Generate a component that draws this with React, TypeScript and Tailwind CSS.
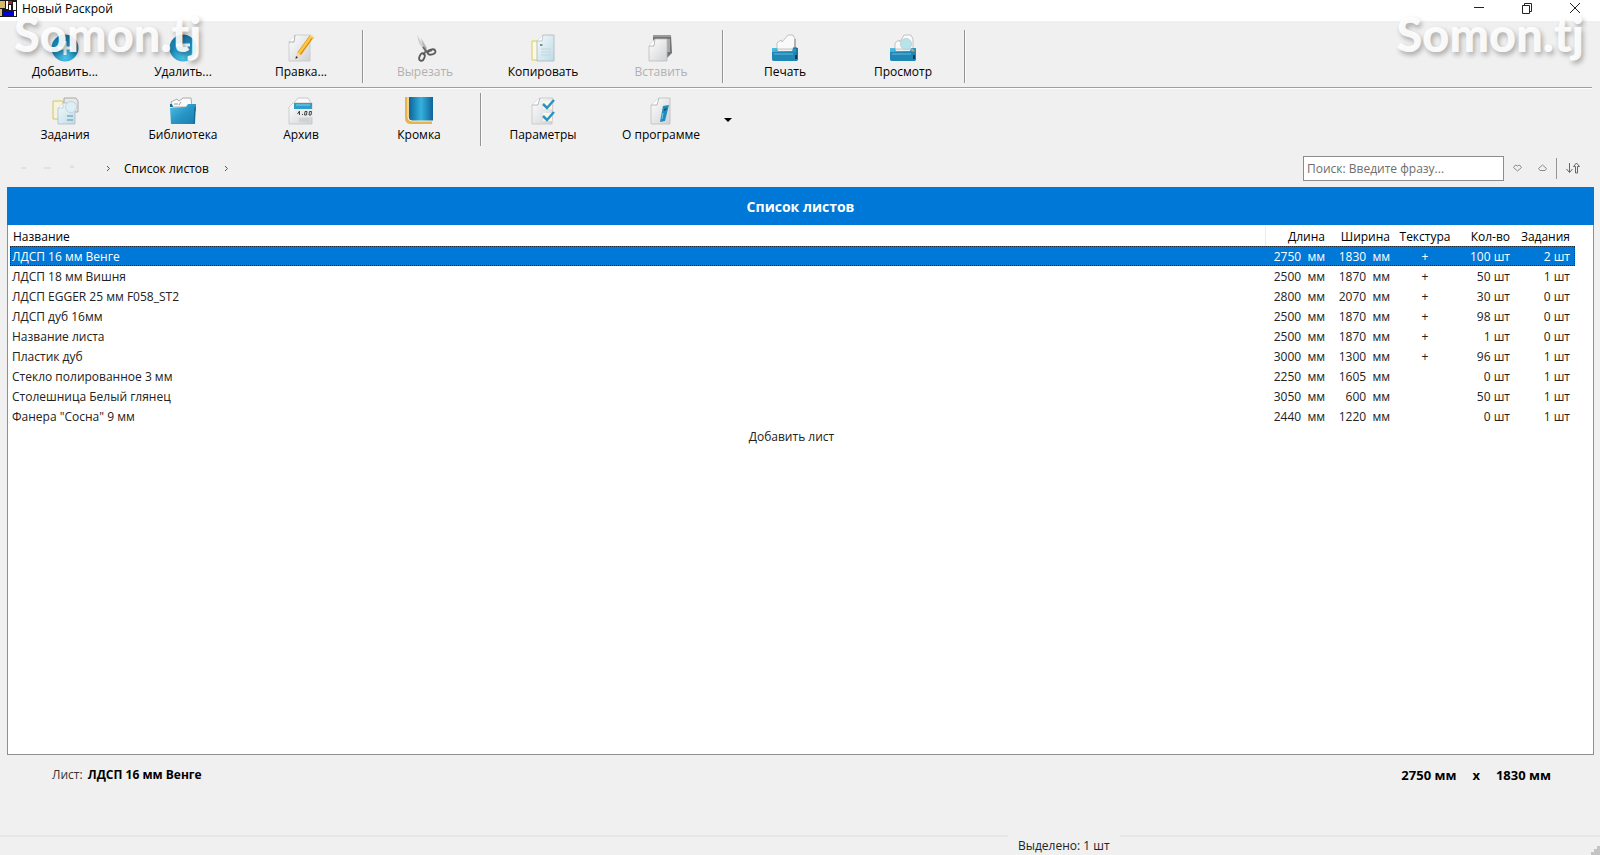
import React from 'react';
import { clsx } from 'clsx';

interface Sheet {
  name: string;
  length: number;
  width: number;
  texture: boolean;
  count: number;
  jobs: number;
}

interface ToolButtonProps {
  label: string;
  icon: React.ReactNode;
  disabled?: boolean;
}

const sheets: Sheet[] = [
  { name: 'ЛДСП 16 мм Венге', length: 2750, width: 1830, texture: true, count: 100, jobs: 2 },
  { name: 'ЛДСП 18 мм Вишня', length: 2500, width: 1870, texture: true, count: 50, jobs: 1 },
  { name: 'ЛДСП EGGER 25 мм F058_ST2', length: 2800, width: 2070, texture: true, count: 30, jobs: 0 },
  { name: 'ЛДСП дуб 16мм', length: 2500, width: 1870, texture: true, count: 98, jobs: 0 },
  { name: 'Название листа', length: 2500, width: 1870, texture: true, count: 1, jobs: 0 },
  { name: 'Пластик дуб', length: 3000, width: 1300, texture: true, count: 96, jobs: 1 },
  { name: 'Стекло полированное 3 мм', length: 2250, width: 1605, texture: false, count: 0, jobs: 1 },
  { name: 'Столешница Белый глянец', length: 3050, width: 600, texture: false, count: 50, jobs: 1 },
  { name: 'Фанера "Сосна" 9 мм', length: 2440, width: 1220, texture: false, count: 0, jobs: 1 },
];

const Icon: React.FC<{ children: React.ReactNode }> = ({ children }) => (
  <svg className="w-7 h-7 shrink-0" viewBox="0 0 28 28" fill="none" aria-hidden="true">
    {children}
  </svg>
);

// Gradients shared by all toolbar icons
const IconDefs = () => (
  <svg className="absolute w-0 h-0" aria-hidden="true">
    <defs>
      <radialGradient id="ball" cx="0.5" cy="0.85" r="0.8">
        <stop offset="0" stopColor="#4cc3e6" />
        <stop offset="0.6" stopColor="#1c8dbd" />
        <stop offset="1" stopColor="#1a74a3" />
      </radialGradient>
      <linearGradient id="blue" x1="0" y1="0" x2="1" y2="1">
        <stop offset="0" stopColor="#55bfe0" />
        <stop offset="0.5" stopColor="#2797c6" />
        <stop offset="1" stopColor="#1a7cae" />
      </linearGradient>
      <linearGradient id="edge" x1="0" y1="0" x2="1" y2="0">
        <stop offset="0" stopColor="#0d6398" />
        <stop offset="0.5" stopColor="#35b2df" />
        <stop offset="1" stopColor="#0d6398" />
      </linearGradient>
      <linearGradient id="paper" x1="0" y1="0" x2="1" y2="1">
        <stop offset="0" stopColor="#ffffff" />
        <stop offset="1" stopColor="#cfd2d4" />
      </linearGradient>
      <linearGradient id="ice" x1="0" y1="0" x2="1" y2="1">
        <stop offset="0" stopColor="#f4fafc" />
        <stop offset="1" stopColor="#bddbe6" />
      </linearGradient>
    </defs>
  </svg>
);

const AddIcon = () => (
  <Icon>
    <circle cx="14" cy="14" r="13.5" fill="url(#ball)" />
    <path d="M14 7v14M7 14h14" stroke="#e8f6fb" strokeWidth="3" />
  </Icon>
);

const RemoveIcon = () => (
  <Icon>
    <circle cx="14" cy="14" r="13.5" fill="url(#ball)" />
    <path d="M7 11h14" stroke="#e8f6fb" strokeWidth="3" />
  </Icon>
);

const EditIcon = () => (
  <Icon>
    <path d="M2 8 8 1h15v26H2z" fill="url(#paper)" stroke="#c4c6c8" strokeWidth="0.8" />
    <path d="M2 8h5l1-7" fill="#fff" stroke="#9a9a9a" strokeWidth="0.8" />
    <path d="M25 2 12 20" stroke="#d98e16" strokeWidth="4.5" />
    <path d="M24.5 2 11.5 20" stroke="#ffc83a" strokeWidth="2.5" />
    <path d="m10 18 4 3-5 4z" fill="#eed8ac" />
    <path d="m9 22 2 1.500L8.500 25z" fill="#333" />
    <path d="m23 1 4 3" stroke="#e9dca0" strokeWidth="2" />
  </Icon>
);

const CutIcon = () => (
  <Icon>
    <path d="M6 1 8 9l6 9 2-2z" fill="#d0d0d0" />
    <path d="M10 4l3 11 1 3 2-4z" fill="#b4b4b4" />
    <path d="m12 13 4 5 5-2M15 17l-3 4" stroke="#6a6a6a" strokeWidth="2" />
    <ellipse cx="20.500" cy="18" rx="4" ry="2.500" transform="rotate(-15 20.500 18)" stroke="#5a5a5a" strokeWidth="1.800" />
    <ellipse cx="11" cy="23" rx="2.500" ry="4" transform="rotate(22 11 23)" stroke="#5a5a5a" strokeWidth="1.800" />
  </Icon>
);

const CopyIcon = () => (
  <Icon>
    <path d="M3 7h8v19H3z" fill="#fbf9e6" stroke="#d9cc52" />
    <path d="M8 7 14 1h11v26H8z" fill="url(#ice)" stroke="#a9b7bd" strokeWidth="0.8" />
    <path d="M8 7h5l1-6" fill="#fff" stroke="#b6bdc0" strokeWidth="0.8" />
    <path d="M11 10h2.500v2H11z" fill="#7b8f99" />
    <path d="M12 15h10M12 18h10M12 21h10" stroke="#c5d5dc" />
  </Icon>
);

const PasteIcon = () => (
  <Icon>
    <path d="M6 1h18l1 18-5 5H6z" fill="#747474" />
    <path d="M6 1h18v2H6z" fill="#9a9a9a" />
    <path d="M20 5h3v13h-3z" fill="#a8a8a8" />
    <path d="m2 12 6-7h12v22H2z" fill="url(#paper)" stroke="#bbb" strokeWidth="0.8" />
    <path d="M2 12h5l1-7" fill="#fff" stroke="#aaa" strokeWidth="0.8" />
  </Icon>
);

const PrintIcon = () => (
  <Icon>
    <path d="m6 9 4-3 1 2 6-7h5l2 4v10H6z" fill="#fafafa" stroke="#b5b5b5" strokeWidth="0.8" />
    <path d="M24 5v10" stroke="#888" />
    <path d="M1 14h5l1 3h14l1-3h5v11l-1 2H2l-1-2z" fill="url(#blue)" />
    <path d="M1 18h26v7l-1 2H2l-1-2z" fill="#1f86b5" />
    <path d="M3 20h19" stroke="#63bcdc" />
    <path d="M22 14h4v11" stroke="#165f86" />
    <path d="M24 21h2v4h-2z" fill="#0b3b55" />
  </Icon>
);

const PreviewIcon = () => (
  <Icon>
    <path d="m6 9 4-3 1 2 4-7h7l2 4v10H6z" fill="#fafafa" stroke="#b5b5b5" strokeWidth="0.8" />
    <path d="M1 14h5l1 3h14l1-3h5v11l-1 2H2l-1-2z" fill="url(#blue)" />
    <path d="M1 18h26v7l-1 2H2l-1-2z" fill="#1f86b5" />
    <path d="M3 20h19" stroke="#63bcdc" />
    <circle cx="17" cy="10" r="5.500" fill="#a9dfe6" fillOpacity="0.85" stroke="#bcd3d6" />
    <path d="m22 15 3 2" stroke="#caa765" strokeWidth="2" />
    <path d="M24 21h2v4h-2z" fill="#0b3b55" />
  </Icon>
);

const JobsIcon = () => (
  <Icon>
    <path d="M2 4h10v18H2z" fill="#f5f3e0" stroke="#d3c65e" />
    <path d="M13 1h12l2 3v11H13z" fill="#e8e8e8" stroke="#999" strokeWidth="0.8" />
    <path d="m7 11 5-5h12v21H7z" fill="url(#ice)" stroke="#a7bfc9" strokeWidth="0.8" />
    <path d="M7 11h5V6" fill="#f8fcfd" stroke="#b7cad1" strokeWidth="0.8" />
    <circle cx="20" cy="10" r="5.500" fill="#dceff5" stroke="#bccfd6" strokeWidth="0.8" />
    <path d="M16 19h6M16 23h6" stroke="#84abc0" strokeWidth="1.500" />
  </Icon>
);

const LibraryIcon = () => (
  <Icon>
    <path d="M2 5 8 2l2 2 4-3h8l1 9H3z" fill="#fafafa" stroke="#999" strokeWidth="0.8" />
    <path d="M5 7h4M12 5l-2 3" stroke="#888" strokeWidth="0.8" />
    <path d="M1 7h2l1 3h-3zM26 8h1v6h-2z" fill="#176f9c" />
    <path d="M1 11 17 10l2-3h8l-1 20H2z" fill="url(#blue)" />
    <path d="m26 10-1 17" stroke="#14688f" />
  </Icon>
);

const ArchiveIcon = () => (
  <Icon>
    <path d="M7 6 11 1h10l3 5" fill="#fafafa" stroke="#bbb" strokeWidth="0.8" />
    <path d="M2 10 6 6h19v21H2z" fill="url(#paper)" stroke="#c4c4c4" strokeWidth="0.8" />
    <path d="M7 6h18v6H7z" fill="#2f9fca" />
    <path d="M9 8h14" stroke="#85d0ea" />
    <path d="M9 12h17v8H9z" fill="#e9ebec" />
    <path d="m10.500 17 2-3v4M15 17.500h1M18 14.500h2l-.5 3.500h-2zM22.500 14.500h2L24 18h-2z" stroke="#444" />
    <path d="M12 22h10M12 24h10" stroke="#c3c8ca" />
  </Icon>
);

const EdgeIcon = () => (
  <Icon>
    <path d="M0 0h5v21q0 2 2 2h20v4H6q-6 0-6-6z" fill="#e6b34e" />
    <path d="M4 0h24v24H8q-4 0-4-4z" fill="url(#edge)" />
    <path d="M3 0v20q0 4 4 4h21" stroke="#fff3cf" />
  </Icon>
);

const OptionsIcon = () => (
  <Icon>
    <path d="m3 8 8-7h13l-1 26H3z" fill="url(#paper)" stroke="#c4c4c4" strokeWidth="0.8" />
    <path d="M3 8h6l2-7" fill="#fff" stroke="#aaa" strokeWidth="0.8" />
    <path d="M14 4h9v8h-9zM14 16h9v8h-9z" fill="#faf8e2" />
    <path d="m14 7 4 4 7-8M14 19l4 4 7-8" stroke="#2a93c4" strokeWidth="2.500" />
  </Icon>
);

const AboutIcon = () => (
  <Icon>
    <path d="m4 8 8-7h11v26H4z" fill="url(#paper)" stroke="#bcbcbc" strokeWidth="0.8" />
    <path d="M4 8h6l2-7" fill="#fff" stroke="#aaa" strokeWidth="0.8" />
    <path d="m16 9 6-1-4 16-5 1z" fill="#1f8cbe" />
    <path d="m17 12 3-1-1 2-2 1z" fill="#0c4e73" />
    <path d="m16 16-1 6" stroke="#6fcbe8" />
  </Icon>
);

const ToolButton: React.FC<ToolButtonProps> = ({ label, icon, disabled }) => (
  <button
    type="button"
    disabled={disabled}
    className={clsx('w-[118px] flex flex-col items-center pt-1', disabled && 'text-[#b0b0b0]')}
  >
    {icon}
    <span className="leading-5">{label}</span>
  </button>
);

const Separator = () => (
  <div className="w-[6px] flex justify-center">
    <div className="w-[2px] border-l border-[#949494] bg-[#fafafa]" />
  </div>
);

const Watermark: React.FC<{ className: string }> = ({ className }) => (
  <div
    className={clsx(
      "absolute top-[14px] pointer-events-none font-['Lato',sans-serif] font-black text-[47px] leading-10 text-white/90 [text-shadow:2px_3px_5px_rgba(0,0,0,0.3)]",
      className
    )}
  >
    Somon.tj
  </div>
);

const TitleBar = () => (
  <header className="h-[21px] shrink-0 bg-white flex items-start justify-between">
    <div className="flex items-start gap-[5px]">
      <svg className="w-[17px] h-[17px]" viewBox="0 0 17 17" aria-hidden="true">
        <path d="M0 0h17v17H0z" fill="#1a1a1a" />
        <path d="M0 1h5v7H0z" fill="#d6b96a" />
        <path d="M0 9h2v7H0z" fill="#d6c08c" />
        <path d="M6 1h2v8H6zM13 2h3v8h-3z" fill="#fff" />
        <path d="M8 1h4v3H8z" fill="#9c2a2a" />
        <path d="M9 5h2v5H9zM14 11h2v5h-2z" fill="#fff" />
        <path d="M4 11h9v5H4z" fill="#0000d8" />
      </svg>
      <h1 className="leading-[18px]">Новый Раскрой</h1>
    </div>
    <div className="flex items-center pt-[2px] pr-px">
      <button type="button" aria-label="Свернуть" className="w-12 flex justify-center">
        <svg className="w-3 h-3" viewBox="0 0 12 12" fill="none" stroke="#222">
          <path d="M1 5.500h10" />
        </svg>
      </button>
      <button type="button" aria-label="Восстановить" className="w-12 flex justify-center">
        <svg className="w-3 h-3" viewBox="0 0 12 12" fill="none" stroke="#222">
          <path d="M1.500 3.500h7v8h-7zM3.500 3.500v-2h7v8h-2" />
        </svg>
      </button>
      <button type="button" aria-label="Закрыть" className="w-12 flex justify-center">
        <svg className="w-3 h-3" viewBox="0 0 12 12" fill="none" stroke="#222">
          <path d="m1 1 10 10M11 1 1 11" />
        </svg>
      </button>
    </div>
  </header>
);

const Toolbar = () => (
  <nav>
    <div className="flex h-[53px] mt-[9px] pl-[6px]">
      <ToolButton label="Добавить..." icon={<AddIcon />} />
      <ToolButton label="Удалить..." icon={<RemoveIcon />} />
      <ToolButton label="Правка..." icon={<EditIcon />} />
      <Separator />
      <ToolButton label="Вырезать" icon={<CutIcon />} disabled />
      <ToolButton label="Копировать" icon={<CopyIcon />} />
      <ToolButton label="Вставить" icon={<PasteIcon />} disabled />
      <Separator />
      <ToolButton label="Печать" icon={<PrintIcon />} />
      <ToolButton label="Просмотр" icon={<PreviewIcon />} />
      <Separator />
    </div>
    <div className="mt-1 mx-2 h-[2px] border-t border-[#a0a0a0] bg-white" />
    <div className="flex h-[53px] mt-1 pl-[6px]">
      <ToolButton label="Задания" icon={<JobsIcon />} />
      <ToolButton label="Библиотека" icon={<LibraryIcon />} />
      <ToolButton label="Архив" icon={<ArchiveIcon />} />
      <ToolButton label="Кромка" icon={<EdgeIcon />} />
      <Separator />
      <ToolButton label="Параметры" icon={<OptionsIcon />} />
      <ToolButton label="О программе" icon={<AboutIcon />} />
      <button type="button" aria-label="Ещё" className="w-4 flex items-center justify-center">
        <svg className="w-2 h-1" viewBox="0 0 8 4">
          <path d="M0 0h8L4 4z" fill="#000" />
        </svg>
      </button>
    </div>
  </nav>
);

const Chevron = () => (
  <svg className="w-[5px] h-[7px]" viewBox="0 0 5 7" fill="none" stroke="#555" aria-hidden="true">
    <path d="m1 1 2.500 2.500L1 6" />
  </svg>
);

const PathBar = () => (
  <div className="flex items-center justify-between h-6 mt-[10px] mb-[7px] pl-5 pr-[19px]">
    <div className="flex items-center">
      <svg className="w-[60px] h-2 mr-[26px]" viewBox="0 0 60 8" fill="none" stroke="#dcdcdc" aria-hidden="true">
        <path d="M1 4h5M24 4h7M50 4l2-2 2 2" strokeWidth="1.500" />
      </svg>
      <Chevron />
      <a href="#sheets" className="ml-[13px] mr-[15px] pt-[2px]">Список листов</a>
      <Chevron />
    </div>
    <div className="flex items-center">
      <input
        type="search"
        aria-label="Поиск"
        placeholder="Поиск: Введите фразу..."
        className="w-[201px] h-[25px] px-[3px] bg-white border border-[#8c8c8c] placeholder:text-[#6e6e6e] outline-none"
      />
      <button type="button" aria-label="Найти далее" className="w-[26px] flex justify-center">
        <svg className="w-[9px] h-2" viewBox="0 0 9 8" fill="none" stroke="#8a8a8a">
          <path d="M.5 3.500 2.500 1l2 1 2-1 2 2.500-4 3.500z" />
        </svg>
      </button>
      <button type="button" aria-label="Найти ранее" className="w-6 flex justify-center">
        <svg className="w-[9px] h-2" viewBox="0 0 9 8" fill="none" stroke="#8a8a8a">
          <path d="M.5 4.500l4-3.500 4 3.500-1.500 2H2z" />
        </svg>
      </button>
      <div className="w-px h-[21px] ml-[2px] bg-[#949494]" />
      <button type="button" aria-label="Сортировка" className="ml-2">
        <svg className="w-4 h-3" viewBox="0 0 16 12" fill="none" stroke="#666">
          <path d="M4.500 1v9M1.500 7l3 3.500 3-3.500M11.500 1 8.500 4.500h2V11h2V4.500h2z" />
        </svg>
      </button>
    </div>
  </div>
);

const SheetTable = () => (
  <main id="sheets" className="flex-1 flex flex-col ml-[7px] mr-[6px] bg-white border border-t-0 border-[#8f8f8f]">
    <h2 className="h-[38px] flex items-center justify-center -mx-px mb-px pt-[2px] bg-[#0078d7] text-white font-bold text-sm">
      Список листов
    </h2>
    <div className="pl-[2px] pr-[18px]">
      <table className="w-full table-fixed border-collapse leading-[18px]">
        <colgroup>
          <col />
          <col className="w-[65px]" />
          <col className="w-[65px]" />
          <col className="w-[60px]" />
          <col className="w-[60px]" />
          <col className="w-[60px]" />
        </colgroup>
        <thead>
          <tr className="h-5 text-right">
            <th className="p-0 pt-[2px] pl-[3px] font-normal text-left">Название</th>
            <th className="p-0 pt-[2px] pr-[5px] font-normal border-l border-[#ececec]">Длина</th>
            <th className="p-0 pt-[2px] pr-[5px] font-normal">Ширина</th>
            <th className="p-0 pt-[2px] font-normal text-center">Текстура</th>
            <th className="p-0 pt-[2px] pr-[5px] font-normal">Кол-во</th>
            <th className="p-0 pt-[2px] pr-[5px] font-normal">Задания</th>
          </tr>
        </thead>
        <tbody>
          {sheets.map((sheet, index) => (
            <tr
              key={sheet.name}
              className={clsx(
                'h-5 text-right whitespace-pre',
                index === 0
                  ? 'bg-[#0078d7] text-white outline-1 outline-dotted -outline-offset-1 outline-[#1d2b3a]'
                  : 'text-[#222]'
              )}
            >
              <td className="p-0 pt-[2px] pl-[2px] text-left">{sheet.name}</td>
              <td className="p-0 pt-[2px] pr-[5px]">{`${sheet.length}  мм`}</td>
              <td className="p-0 pt-[2px] pr-[5px]">{`${sheet.width}  мм`}</td>
              <td className="p-0 pt-[2px] text-center">{sheet.texture ? '+' : ''}</td>
              <td className="p-0 pt-[2px] pr-[5px]">{`${sheet.count} шт`}</td>
              <td className="p-0 pt-[2px] pr-[5px]">{`${sheet.jobs} шт`}</td>
            </tr>
          ))}
          <tr className="h-5 text-[#222]">
            <td colSpan={6} className="p-0 pt-[2px] pr-[2px] text-center">
              <button type="button">Добавить лист</button>
            </td>
          </tr>
        </tbody>
      </table>
    </div>
  </main>
);

const Footer = () => (
  <footer>
    <div className="h-20 pt-[10px] pl-[52px] pr-[49px] flex justify-between leading-5">
      <p className="text-[#333]">
        Лист: <b className="ml-[2px] text-black">ЛДСП 16 мм Венге</b>
      </p>
      <p className="flex gap-4 font-bold text-[13px]">
        <span>2750 мм</span>
        <span>x</span>
        <span>1830 мм</span>
      </p>
    </div>
    {/* Status bar */}
    <div className="flex h-5 leading-[18px]">
      <div className="w-[63%] border-t-2 border-[#e6e6e6]" />
      <div className="w-28 pl-[10px] pt-[2px] text-[#222] whitespace-nowrap">Выделено: 1 шт</div>
      <div className="flex-1 flex items-end justify-end border-t-2 border-[#e6e6e6]">
        <svg className="w-[10px] h-[10px]" viewBox="0 0 10 10" fill="#c4c4c4" aria-hidden="true">
          <path d="M7 1h3v3H7zM4 4h3v3H4zM7 4h3v3H7zM1 7h3v3H1zM4 7h3v3H4zM7 7h3v3H7z" />
        </svg>
      </div>
    </div>
  </footer>
);

const App: React.FC = () => {
  return (
    <div className="relative min-h-screen flex flex-col overflow-hidden bg-[#f0f0f0] text-black text-xs font-['Open_Sans','Noto_Sans',sans-serif]">
      <IconDefs />
      <TitleBar />
      <Toolbar />
      <PathBar />
      <SheetTable />
      <Footer />
      <Watermark className="left-[14px]" />
      <Watermark className="right-[16px]" />
    </div>
  );
};

export default App;
